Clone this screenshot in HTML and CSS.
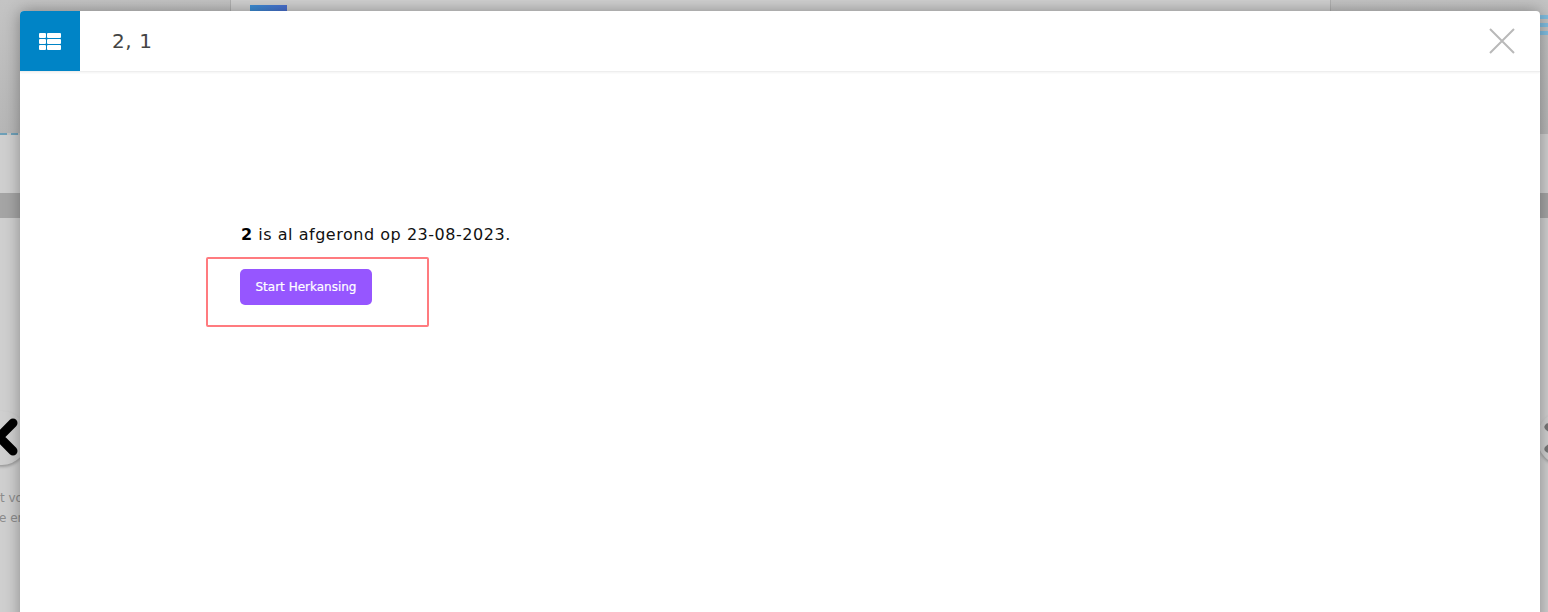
FILE: index.html
```html
<!DOCTYPE html>
<html lang="nl">
<head>
<meta charset="utf-8">
<title>2, 1</title>
<link rel="stylesheet" href="styles.css">
</head>
<body>
<div class="backdrop">
  <div class="bg-top"></div>
  <div class="bg-sheet"><div class="bg-tab"></div></div>
  <div class="bg-lines"><span></span><span></span><span></span></div>
  <div class="bg-dash"></div>
  <div class="bg-band"></div>
  <div class="bg-nav bg-nav-left"><svg width="46" height="46" viewBox="0 0 46 46"><path d="M17 8 L3 22 L17 36" fill="none" stroke="#000" stroke-width="9" stroke-linecap="round" stroke-linejoin="round"/></svg></div>
  <div class="bg-nav bg-nav-right"><svg width="46" height="46" viewBox="0 0 46 46"><path d="M11 12 L24 23 L11 34" fill="none" stroke="#777" stroke-width="7" stroke-linecap="round" stroke-linejoin="round"/></svg></div>
  <p class="bg-text bg-text-1">t vo</p>
  <p class="bg-text bg-text-2">e en</p>
</div>
<main class="modal">
  <header class="modal-head">
    <div class="head-icon">
      <svg width="22" height="17" viewBox="0 0 22 17" fill="#fff"><rect x="0" y="0" width="7" height="5" rx="1"/><rect x="8" y="0" width="14" height="5" rx="1"/><rect x="0" y="6" width="7" height="5" rx="1"/><rect x="8" y="6" width="14" height="5" rx="1"/><rect x="0" y="12" width="7" height="5" rx="1"/><rect x="8" y="12" width="14" height="5" rx="1"/></svg>
    </div>
    <h1 class="head-title">2, 1</h1>
    <button class="close" aria-label="Sluiten"><svg width="26" height="26" viewBox="0 0 26 26"><path d="M1 1 L25 25 M25 1 L1 25" stroke="#b9b9b9" stroke-width="2" fill="none"/></svg></button>
  </header>
  <section class="modal-body">
    <p class="message"><strong>2</strong> is al afgerond op 23-08-2023.</p>
    <div class="highlight">
      <button class="retake">Start Herkansing</button>
    </div>
  </section>
</main>
</body>
</html>
```
FILE: styles.css
```css
* { box-sizing: border-box; }
html, body { margin: 0; height: 100%; overflow: hidden; }
body { background: #cfcfcf; font-family: "DejaVu Sans", Verdana, sans-serif; position: relative; }

.backdrop { position: absolute; inset: 0; overflow: hidden; }
.bg-top { position: absolute; left: 0; top: 0; width: 100%; height: 134px; background: linear-gradient(#c4c4c4, #b6b6b6); }
.bg-sheet { position: absolute; left: 230px; top: 0; width: 1101px; height: 134px; background: #d0d0d0; border-left: 1px solid #b0b0b0; border-right: 1px solid #b0b0b0; }
.bg-tab { position: absolute; left: 19px; top: 5px; width: 37px; height: 10px; background: linear-gradient(90deg, #3b8fd6, #4a6fd0); }
.bg-lines { position: absolute; left: 1540px; top: 15px; width: 8px; }
.bg-lines span { display: block; height: 4px; margin-bottom: 4px; background: #7fbde0; }
.bg-dash { position: absolute; left: 0; top: 133px; width: 20px; height: 2px; background: repeating-linear-gradient(90deg, #6ea0b8 0 7px, #c4c4c4 7px 11px); }
.bg-band { position: absolute; left: 0; top: 193px; width: 100%; height: 25px; background: #a5a5a5; }
.bg-nav { position: absolute; top: 411px; width: 52px; height: 54px; border-radius: 50%; background: #cfcfcf; box-shadow: 0 2px 3px #9a9a9a; display: flex; align-items: center; }
.bg-nav-left { left: -24px; justify-content: flex-end; }
.bg-nav-left svg { margin-right: -14px; }
.bg-nav-right { left: 1537px; justify-content: flex-start; }
.bg-text { position: absolute; left: 0; margin: 0; font-size: 12px; color: #8c8c8c; white-space: nowrap; }
.bg-text-1 { top: 491px; }
.bg-text-2 { top: 511px; left: -1px; }

.modal { position: absolute; left: 20px; top: 11px; width: 1520px; height: 620px; background: #fff; border-radius: 4px 4px 0 0; box-shadow: 0 0 16px rgba(0,0,0,.35); overflow: hidden; }
.modal-head { height: 61px; display: flex; align-items: center; border-bottom: 1px solid #eee; box-shadow: 0 1px 2px rgba(0,0,0,.05); }
.head-icon { width: 60px; height: 60px; background: #0084c6; display: flex; align-items: center; justify-content: center; flex: none; }
.head-title { margin: 0 0 0 32px; font-size: 20px; letter-spacing: .6px; font-weight: 400; color: #444; flex: 1; }
.close { border: 0; padding: 0; background: none; margin-right: 25px; width: 26px; height: 26px; }
.close svg { display: block; }

.modal-body { padding: 153px 0 0 221px; }
.message { margin: 0; font-size: 16px; letter-spacing: .53px; line-height: 20px; color: #111; }
.message strong { color: #000; }
.highlight { margin: 12px 0 0 -35px; width: 223px; height: 70px; border: 2px solid #ff7b7f; border-radius: 2px; padding: 10px 0 0 32px; }
.retake { display: block; width: 132px; height: 36px; padding: 0; border: 0; border-radius: 5px; background: #9656ff; color: #fff; font-family: "DejaVu Sans", Verdana, sans-serif; font-size: 12px; -webkit-text-stroke: .2px #fff; }
```
